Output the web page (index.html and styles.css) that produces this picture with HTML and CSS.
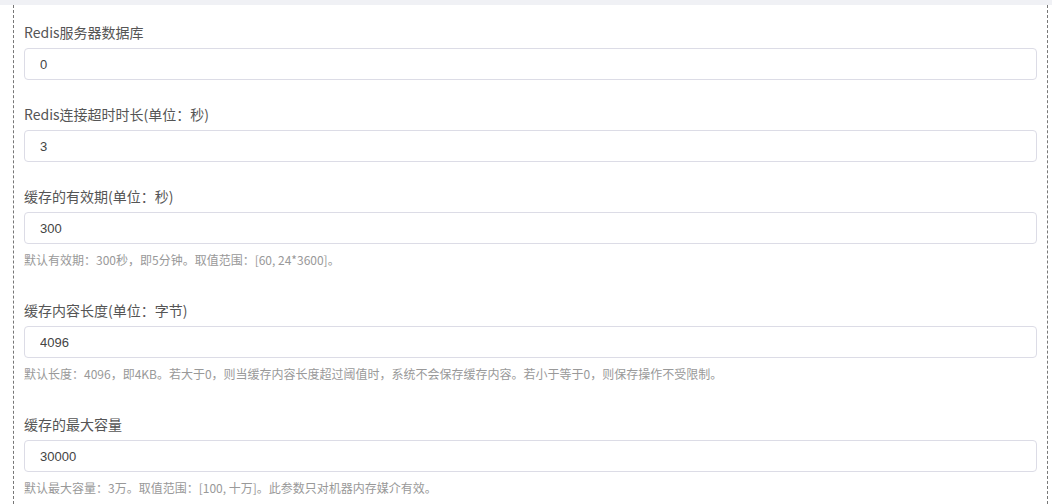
FILE: index.html
```html
<!DOCTYPE html>
<html lang="zh-CN">
<head>
    <meta charset="UTF-8">
    <title>缓存设置</title>
    <link rel="stylesheet" href="styles.css">
</head>
<body>
    <div class="top-band"></div>

    <form class="settings">
        <!-- Redis 数据库编号 -->
        <div class="form-group">
            <label for="redis-db">Redis服务器数据库</label>
            <input type="text" id="redis-db" value="0">
        </div>

        <!-- 连接超时 -->
        <div class="form-group">
            <label for="redis-timeout">Redis连接超时时长(单位：秒)</label>
            <input type="text" id="redis-timeout" value="3">
        </div>

        <!-- 有效期 -->
        <div class="form-group">
            <label for="cache-ttl">缓存的有效期(单位：秒)</label>
            <input type="text" id="cache-ttl" value="300">
            <p class="help">默认有效期：300秒，即5分钟。取值范围：[60, 24*3600]。</p>
        </div>

        <!-- 内容长度 -->
        <div class="form-group">
            <label for="cache-size">缓存内容长度(单位：字节)</label>
            <input type="text" id="cache-size" value="4096">
            <p class="help">默认长度：4096，即4KB。若大于0，则当缓存内容长度超过阈值时，系统不会保存缓存内容。若小于等于0，则保存操作不受限制。</p>
        </div>

        <!-- 最大容量 -->
        <div class="form-group">
            <label for="cache-max">缓存的最大容量</label>
            <input type="text" id="cache-max" value="30000">
            <p class="help">默认最大容量：3万。取值范围：[100, 十万]。此参数只对机器内存媒介有效。</p>
        </div>
    </form>
</body>
</html>
```

FILE: styles.css
```css
* {
    margin: 0;
    padding: 0;
    box-sizing: border-box;
}

body {
    background-color: white;
    font-family: "Microsoft YaHei", "Noto Sans CJK SC", "Liberation Sans", sans-serif;
    color: #555;
}

/* Серая полоса сверху */
.top-band {
    height: 5px;
    background-color: #f0f1f5;
}

/* Рамка с пунктиром по бокам */
.settings {
    margin: 0 4px 0 13px;
    padding: 17px 10px 0 10px;
    border-left: 1px dashed #777;
    border-right: 1px dashed #777;
    min-height: 499px;
}

.form-group {
    display: flex;
    flex-direction: column;
    margin-bottom: 24px;
}

label {
    font-size: 14px;
    line-height: 20px;
    margin-bottom: 6px;
    color: #555;
}

input {
    height: 32px;
    padding: 0 15px;
    border: 1px solid #dcdce6;
    border-radius: 4px;
    font-family: "Liberation Sans", "Noto Sans CJK SC", sans-serif;
    font-size: 13px;
    color: #444;
    outline: none;
    width: 100%;
}

.help {
    margin: 7px 0 0 0;
    font-size: 12px;
    line-height: 18px;
    color: #999;
    padding-bottom: 7px;
}
```
